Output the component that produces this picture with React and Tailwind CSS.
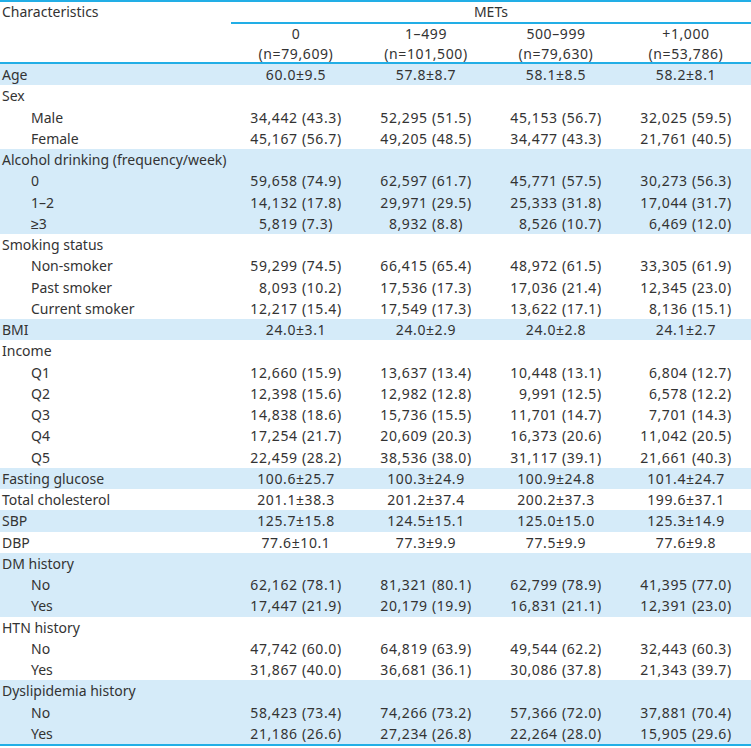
import React from "react";

const BLUE = "bg-[#d5ebf9]";

const rows = [
  { label: "Age", bg: true, v: ["60.0±9.5", "57.8±8.7", "58.1±8.5", "58.2±8.1"] },
  { label: "Sex", bg: false },
  { label: "Male", sub: true, bg: false, v: ["34,442 (43.3)", "52,295 (51.5)", "45,153 (56.7)", "32,025 (59.5)"] },
  { label: "Female", sub: true, bg: false, v: ["45,167 (56.7)", "49,205 (48.5)", "34,477 (43.3)", "21,761 (40.5)"] },
  { label: "Alcohol drinking (frequency/week)", bg: true },
  { label: "0", sub: true, bg: true, v: ["59,658 (74.9)", "62,597 (61.7)", "45,771 (57.5)", "30,273 (56.3)"] },
  { label: "1–2", sub: true, bg: true, v: ["14,132 (17.8)", "29,971 (29.5)", "25,333 (31.8)", "17,044 (31.7)"] },
  { label: "≥3", sub: true, bg: true, v: ["5,819 (7.3)", "8,932 (8.8)", "8,526 (10.7)", "6,469 (12.0)"] },
  { label: "Smoking status", bg: false },
  { label: "Non-smoker", sub: true, bg: false, v: ["59,299 (74.5)", "66,415 (65.4)", "48,972 (61.5)", "33,305 (61.9)"] },
  { label: "Past smoker", sub: true, bg: false, v: ["8,093 (10.2)", "17,536 (17.3)", "17,036 (21.4)", "12,345 (23.0)"] },
  { label: "Current smoker", sub: true, bg: false, v: ["12,217 (15.4)", "17,549 (17.3)", "13,622 (17.1)", "8,136 (15.1)"] },
  { label: "BMI", bg: true, v: ["24.0±3.1", "24.0±2.9", "24.0±2.8", "24.1±2.7"] },
  { label: "Income", bg: false },
  { label: "Q1", sub: true, bg: false, v: ["12,660 (15.9)", "13,637 (13.4)", "10,448 (13.1)", "6,804 (12.7)"] },
  { label: "Q2", sub: true, bg: false, v: ["12,398 (15.6)", "12,982 (12.8)", "9,991 (12.5)", "6,578 (12.2)"] },
  { label: "Q3", sub: true, bg: false, v: ["14,838 (18.6)", "15,736 (15.5)", "11,701 (14.7)", "7,701 (14.3)"] },
  { label: "Q4", sub: true, bg: false, v: ["17,254 (21.7)", "20,609 (20.3)", "16,373 (20.6)", "11,042 (20.5)"] },
  { label: "Q5", sub: true, bg: false, v: ["22,459 (28.2)", "38,536 (38.0)", "31,117 (39.1)", "21,661 (40.3)"] },
  { label: "Fasting glucose", bg: true, v: ["100.6±25.7", "100.3±24.9", "100.9±24.8", "101.4±24.7"] },
  { label: "Total cholesterol", bg: false, v: ["201.1±38.3", "201.2±37.4", "200.2±37.3", "199.6±37.1"] },
  { label: "SBP", bg: true, v: ["125.7±15.8", "124.5±15.1", "125.0±15.0", "125.3±14.9"] },
  { label: "DBP", bg: false, v: ["77.6±10.1", "77.3±9.9", "77.5±9.9", "77.6±9.8"] },
  { label: "DM history", bg: true },
  { label: "No", sub: true, bg: true, v: ["62,162 (78.1)", "81,321 (80.1)", "62,799 (78.9)", "41,395 (77.0)"] },
  { label: "Yes", sub: true, bg: true, v: ["17,447 (21.9)", "20,179 (19.9)", "16,831 (21.1)", "12,391 (23.0)"] },
  { label: "HTN history", bg: false },
  { label: "No", sub: true, bg: false, v: ["47,742 (60.0)", "64,819 (63.9)", "49,544 (62.2)", "32,443 (60.3)"] },
  { label: "Yes", sub: true, bg: false, v: ["31,867 (40.0)", "36,681 (36.1)", "30,086 (37.8)", "21,343 (39.7)"] },
  { label: "Dyslipidemia history", bg: true },
  { label: "No", sub: true, bg: true, v: ["58,423 (73.4)", "74,266 (73.2)", "57,366 (72.0)", "37,881 (70.4)"] },
  { label: "Yes", sub: true, bg: true, v: ["21,186 (26.6)", "27,234 (26.8)", "22,264 (28.0)", "15,905 (29.6)"] },
];

const GRID = "grid grid-cols-[231px_130px_130px_130px_130px]";

function Value({ text }) {
  const pad = /^\d,\d{3} \(\d{2}\.\d\)$/.test(text);
  return (
    <div className="text-center whitespace-pre tracking-[0.6px]">
      {pad && <span className="inline-block w-[calc(1ch+0.6px)]" />}
      {text}
    </div>
  );
}

export default function App() {
  return (
    <div
      className="w-[751px] bg-white text-[#333333] text-[14px] tabular-nums"
      style={{ fontFamily: "'Noto Sans', sans-serif" }}
    >
      <div className="border-t-2 border-[#22aee6]">
        <div className={GRID}>
          <div className="h-[20px] leading-[20px] pl-[2px]">Characteristics</div>
          <div className="col-span-4 h-[22px] leading-[20px] text-center border-b-2 border-[#22aee6]">METs</div>
        </div>
        <div className={`${GRID} h-[40px] leading-[20px] border-b-2 border-[#22aee6]`}>
          <div />
          {[["0", "(n=79,609)"], ["1–499", "(n=101,500)"], ["500–999", "(n=79,630)"], ["+1,000", "(n=53,786)"]].map(
            ([a, b], i) => (
              <div key={i} className="text-center tracking-[0.6px]">
                <div>{a}</div>
                <div>{b}</div>
              </div>
            )
          )}
        </div>
        <div className="border-b-2 border-[#22aee6]">
          {rows.map((r, i) => (
            <div key={i} className={`${GRID} h-[21.25px] leading-[21.25px] ${r.bg ? BLUE : "bg-white"}`}>
              <div className={r.sub ? "pl-[31px]" : "pl-[2px]"}>{r.label}</div>
              {r.v ? r.v.map((t, j) => <Value key={j} text={t} />) : [0, 1, 2, 3].map((j) => <div key={j} />)}
            </div>
          ))}
        </div>
      </div>
    </div>
  );
}
